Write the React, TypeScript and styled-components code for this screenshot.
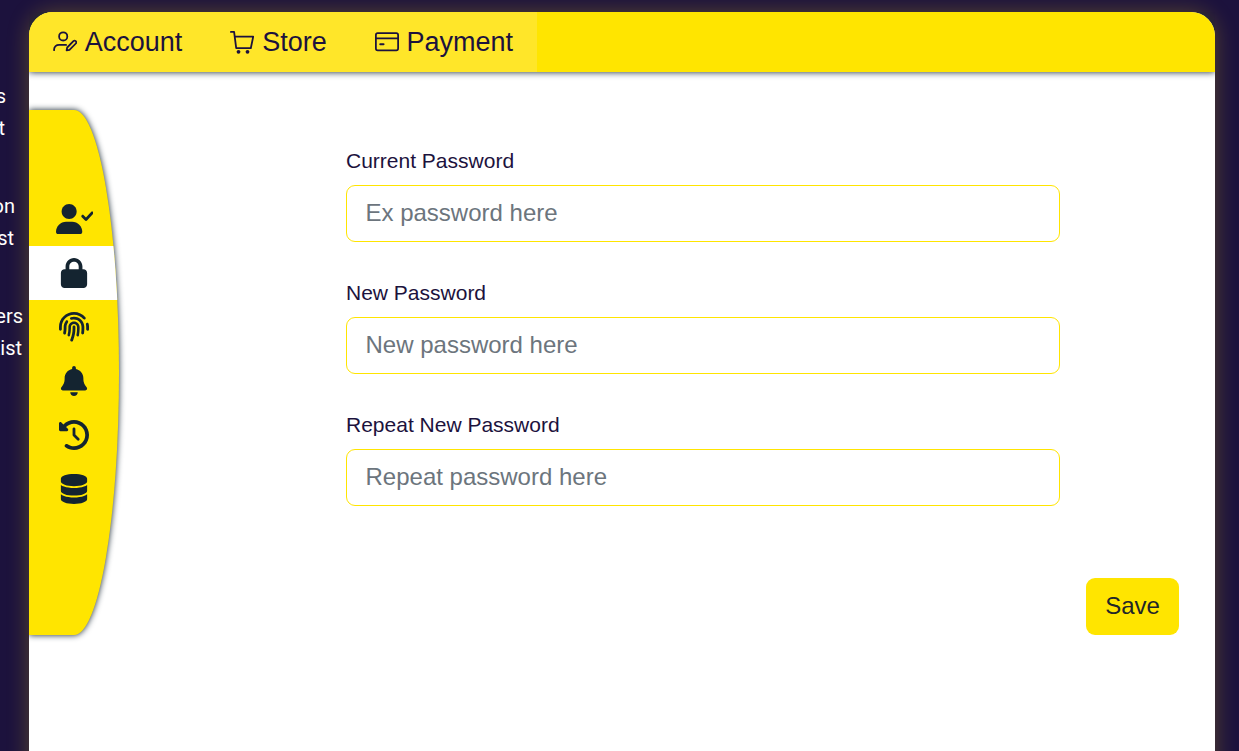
import React from 'react';
import styled, { createGlobalStyle } from 'styled-components';
import { FaLock, FaFingerprint, FaBell, FaClockRotateLeft, FaDatabase } from 'react-icons/fa6';

const Global = createGlobalStyle`
  *, *::before, *::after { box-sizing: border-box; }
  body { margin: 0; background: #1c123d; overflow: hidden; font-family: "Liberation Sans", Arial, sans-serif; }
`;

const Page = styled.div`
  display: flex;
  height: 751px;
  width: 1239px;
  overflow: hidden;
  background: #1c123d;
`;

const Backdrop = styled.aside`
  width: 29px;
  flex: none;
  padding-top: 80px;
  display: flex;
  flex-direction: column;
  gap: 46px;
  align-items: flex-start;
`;

const Caption = styled.div<{ $edge: number }>`
  width: ${(p) => p.$edge}px;
  display: flex;
  flex-direction: column;
  align-items: flex-end;
  font: 20px/32px Roboto, sans-serif;
  color: #fff;
  white-space: nowrap;
`;

const CaptionLine = styled.span<{ $inset?: number }>`
  margin-right: ${(p) => p.$inset ?? 0}px;
`;

const Panel = styled.main`
  width: 1186px;
  height: 780px;
  flex: none;
  margin-top: 12px;
  background: #fff;
  border-radius: 24px 24px 0 0;
  box-shadow: 0 0 22px rgba(255, 210, 0, 0.27);
`;

const TopBar = styled.nav`
  display: flex;
  height: 60px;
  background: #ffe500;
  border-radius: 24px 24px 0 0;
  overflow: hidden;
`;

const TopBarShadow = styled.div`
  border-radius: 24px 24px 0 0;
  box-shadow: 0 0 7px #142430;
  clip-path: inset(0 0 -12px 0);
`;

const Tabs = styled.div`
  display: flex;
  width: 508px;
  background: #ffe629;
`;

const Tab = styled.a`
  display: flex;
  align-items: center;
  gap: 7.8px;
  padding: 0 24px;
  font-size: 27px;
  color: #1c123d;
  white-space: nowrap;

  svg { width: 24px; height: 24px; flex: none; }
`;

const Body = styled.div`
  display: flex;
  align-items: flex-start;
`;

const RailClip = styled.div`
  clip-path: inset(-12px -12px -12px 0);
  margin-top: 38px;
`;

const Rail = styled.div`
  width: 90px;
  height: 525px;
  display: flex;
  flex-direction: column;
  padding-top: 82px;
  background: #ffe500;
  border-radius: 0 50% 50% 0;
  box-shadow: 0 0 6px #142430;
  overflow: hidden;
`;

const RailItem = styled.button<{ $active?: boolean }>`
  display: flex;
  align-items: center;
  justify-content: center;
  height: 54px;
  width: 100%;
  flex: none;
  padding: 0 0 0 0.5px;
  border: 0;
  font-size: 30px;
  color: #142430;
  background: ${(p) => (p.$active ? '#fff' : 'transparent')};
`;

const Form = styled.form`
  width: 714px;
  margin: 73px 0 0 227px;
  display: flex;
  flex-direction: column;
  gap: 35px;
`;

const Field = styled.label`
  display: flex;
  flex-direction: column;
  gap: 9px;
  font-size: 21px;
  line-height: 31px;
  color: #1c123d;
`;

const Input = styled.input`
  height: 57px;
  padding: 0 18.5px 2px;
  border: 1px solid #ffe500;
  border-radius: 9px;
  background: #fff;
  font: 24px "Liberation Sans", Arial, sans-serif;
  outline: none;

  &::placeholder { color: #6c757d; opacity: 1; }
`;

const SaveButton = styled.button`
  width: 93px;
  height: 57px;
  margin: 506px 0 0 26px;
  padding: 0 0 2px;
  border: 0;
  border-radius: 9px;
  background: #ffe500;
  color: #212529;
  font: 24px "Liberation Sans", Arial, sans-serif;
`;

const UserEditIcon = () => (
  <svg viewBox="0 0 24 24" fill="none" stroke="currentColor" strokeWidth="1.8" strokeLinecap="round" strokeLinejoin="round">
    <circle cx="10.2" cy="6.4" r="4.1" />
    <path d="M1.1 20.2v-.6c0-3 2.2-4.700 5-4.700h7" />
    <path d="m14.200 17.500 6.200-6.300a1.600 1.600 0 0 1 2.400 2.300l-6.300 6.300-2.900.6z" />
  </svg>
);

const CartIcon = () => (
  <svg viewBox="0 0 24 24" fill="none" stroke="currentColor" strokeWidth="1.8" strokeLinecap="round" strokeLinejoin="round">
    <path d="M.9 1.900h3.200l2.100 16.300h14.600l2.400-11.500H4.700" />
    <circle cx="8.5" cy="21.800" r="1.900" fill="currentColor" stroke="none" />
    <circle cx="17.5" cy="21.800" r="1.900" fill="currentColor" stroke="none" />
  </svg>
);

const CardIcon = () => (
  <svg viewBox="0 0 24 24" fill="none" stroke="currentColor" strokeWidth="1.75">
    <rect x=".9" y="3.100" width="22.200" height="17.300" rx="1.800" />
    <path d="M.8 8.400h22.400" />
    <path d="M5.300 14.200h3.200" strokeWidth="2.100" strokeLinecap="round" />
  </svg>
);

const UserCheckIcon = () => (
  <svg viewBox="0 0 640 512" width="37.5" height="30" fill="currentColor">
    <path d="M274.7 304H173.3C77.61 304 0 381.6 0 477.3C0 496.5 15.52 512 34.66 512h378.7C432.500 512 448 496.500 448 477.300C448 381.600 370.400 304 274.700 304z" />
    <path d="M224 256c70.700 0 128-57.310 128-128S294.700 0 224 0S96 57.310 96 128S153.300 256 224 256z" />
    <path d="M632.300 134.400c-9.703-9-24.910-8.453-33.920 1.266l-87.050 93.750l-38.390-38.390c-9.375-9.375-24.560-9.375-33.940 0s-9.375 24.560 0 33.940l56 56C499.500 285.500 505.600 288 512 288h.4375c6.531-.125 12.720-2.891 17.160-7.672l104-112C642.600 158.600 642 143.400 632.300 134.400z" />
  </svg>
);

const railIcons = [UserCheckIcon, FaLock, FaFingerprint, FaBell, FaClockRotateLeft, FaDatabase];

const fields = [
  { label: 'Current Password', hint: 'Ex password here' },
  { label: 'New Password', hint: 'New password here' },
  { label: 'Repeat New Password', hint: 'Repeat password here' },
];

export default function App() {
  return (
    <Page>
      <Global />
      <Backdrop>
        <Caption $edge={6}><span>s</span><CaptionLine $inset={1}>t</CaptionLine></Caption>
        <Caption $edge={15}><span>on</span><CaptionLine $inset={1}>st</CaptionLine></Caption>
        <Caption $edge={23}><span>ers</span><CaptionLine $inset={1}>List</CaptionLine></Caption>
      </Backdrop>
      <Panel>
        <TopBarShadow>
          <TopBar>
            <Tabs>
              <Tab><UserEditIcon />Account</Tab>
              <Tab><CartIcon />Store</Tab>
              <Tab><CardIcon />Payment</Tab>
            </Tabs>
          </TopBar>
        </TopBarShadow>
        <Body>
          <RailClip>
            <Rail>
              {railIcons.map((Icon, i) => (
                <RailItem key={i} $active={i === 1}><Icon /></RailItem>
              ))}
            </Rail>
          </RailClip>
          <Form>
            {fields.map((f) => (
              <Field key={f.label}>
                {f.label}
                <Input placeholder={f.hint} />
              </Field>
            ))}
          </Form>
          <SaveButton type="button">Save</SaveButton>
        </Body>
      </Panel>
    </Page>
  );
}
